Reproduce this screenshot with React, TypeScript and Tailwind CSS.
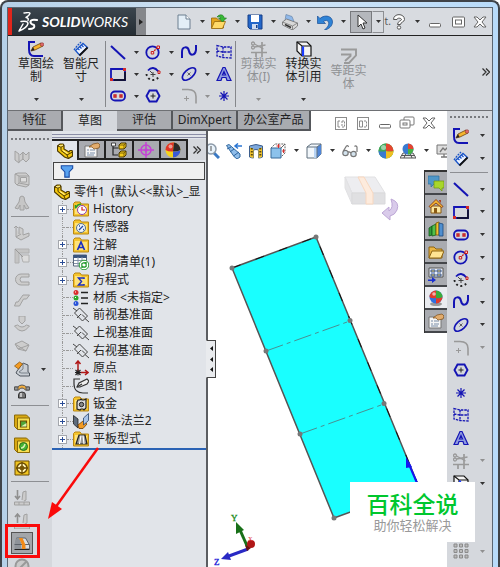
import type { ReactNode } from 'react';
import clsx from 'clsx';

/* ---------- Icon drawings, all on a 16 x 16 grid ---------- */

const folder = (
  <>
    <path d="M.5 2.500L2 1h5l1.500 2H15.500v12H.5z" fill="#f6c52e" stroke="#b98712" />
    <path d="M2 4h6l1 1h5v8H2z" fill="#fde27c" />
  </>
);

const icons: Record<string, ReactNode> = {
  sketch: (
    <>
      <path d="M7 1H1v7c0 5 2 7 5 7h9" fill="none" stroke="#1414b4" strokeWidth="2" />
      <path d="M3 10l2-4 8-4 2 3-8 4z" fill="#f5b52e" stroke="#6b4210" strokeWidth=".8" />
      <path d="M3 10l2-4 1.500 3z" fill="#222" />
      <circle cx="14" cy="3.500" r="1.800" fill="#e06a6a" stroke="#7a2020" strokeWidth=".5" />
    </>
  ),
  dimension: (
    <>
      <path d="M1 9l3-4 4-4" fill="none" stroke="#1a55c8" strokeWidth="1.300" strokeDasharray="2 1" />
      <path d="M2.500 9.500L10 2.500l4.500 4-8 7.500z" fill="#eef4ff" stroke="#1a55c8" strokeWidth="1.300" />
      <path d="M6.500 14.500l8-8" stroke="#111" strokeWidth="1.800" />
      <path d="M4.500 7.500L6.500 9M6.500 5.500l2 2M8.500 4l2 2" stroke="#1a55c8" strokeWidth="1.300" />
    </>
  ),
  line: <path d="M1 2l14 13" stroke="#1414b4" strokeWidth="2" />,
  rect: (
    <>
      <path d="M1 3h14v11H1z" fill="none" stroke="#1414b4" strokeWidth="1.800" />
      <path d="M4 14h11V6" fill="none" stroke="#111" strokeWidth="1.500" />
      <path d="M13 2h3v3h-3zM0 12h3v3H0z" fill="#d42a2a" />
    </>
  ),
  slot: (
    <>
      <rect x="1" y="3.500" width="14" height="9" rx="4" fill="none" stroke="#1414b4" strokeWidth="1.800" />
      <path d="M4 7h2v2H4zM10 7h2v2h-2z" fill="none" stroke="#c81e1e" strokeWidth="1.300" />
    </>
  ),
  circle: (
    <>
      <circle cx="7.500" cy="8.500" r="6.200" fill="none" stroke="#1414b4" strokeWidth="1.800" />
      <path d="M7 9l6-6" stroke="#c81e1e" strokeWidth="1.300" strokeDasharray="2 1" />
      <path d="M6.200 7.500h2.500v2.500H6.200zM12 2h2.500v2.500H12z" fill="#f5d5d5" stroke="#c81e1e" />
    </>
  ),
  arc: (
    <>
      <path d="M3 4.500q5-5.500 10.500 1" fill="none" stroke="#1414b4" strokeWidth="1.800" />
      <path d="M1.500 8a6.500 6.500 0 0 0 12 3" fill="none" stroke="#222" strokeWidth="1.900" strokeDasharray="1.900 2.600" />
      <path d="M5 5l2.500 2.500M8 6v5M5.500 8.500h5" stroke="#333" strokeWidth=".9" />
      <path d="M13 5h2v2.500h-2z" fill="#f5d5d5" stroke="#c81e1e" />
    </>
  ),
  spline: <path d="M1 14V8c0-6 6-6 7-1s6 5 7-1V1" fill="none" stroke="#1414b4" strokeWidth="2" />,
  ellipse: (
    <>
      <ellipse cx="8" cy="8" rx="8" ry="4.300" transform="rotate(-42 8 8)" fill="none" stroke="#1414b4" strokeWidth="1.700" />
      <path d="M6.500 6.500l3 3M9.500 6.500l-3 3" stroke="#555" strokeWidth=".9" />
    </>
  ),
  fillet: (
    <>
      <path d="M1 1.500h6q8 0 8 7v7" fill="none" stroke="#999" strokeWidth="1.600" />
      <path d="M3 10.500h5M5.500 8v5" stroke="#999" />
    </>
  ),
  planeGrid: (
    <path
      d="M1 1.500l6 1.500 8 0v11l-8-.500L1 12zM1 7l6 1h8M7 3v10.500"
      fill="none"
      stroke="#1414b4"
      strokeWidth="1.300"
      strokeDasharray="2.500 1"
    />
  ),
  textA: (
    <path
      d="M1 14.500l6-13h2l6 13h-4l-1-3H6l-1 3zM6.500 9h3L8 5.500z"
      fill="#8f9be0"
      stroke="#1414b4"
      strokeWidth="1.200"
      fillRule="evenodd"
    />
  ),
  polygon: (
    <>
      <path d="M4.500 2.500h7l3 5.500-3 5.500h-7l-3-5.500z" fill="none" stroke="#1414b4" strokeWidth="1.900" />
      <path d="M5.500 8h5M8 5.500v5" stroke="#222" />
    </>
  ),
  point: <path d="M8 3v10M3 8h10M4.500 4.500l7 7M11.500 4.500l-7 7" stroke="#1414b4" strokeWidth="1.200" />,
  trim: (
    <g fill="none" stroke="#9a9a9a" strokeWidth="1.300">
      <path d="M0 11.500h16M11 1v15M5 11v5" strokeWidth="1.700" />
      <path d="M3.500 6l11-2M3.500 3l9 5" />
      <circle cx="2" cy="2.500" r="1.500" />
      <circle cx="2" cy="6.500" r="1.500" />
    </g>
  ),
  convert: (
    <>
      <path d="M1 1h10l4 4v10H6L1 10z" fill="#f4f4f4" stroke="#111" strokeWidth="1.200" />
      <path d="M1 1l5 4h9M6 5v10" fill="none" stroke="#111" strokeWidth="1.200" />
      <path d="M7 5.500v9.500" stroke="#1a3cff" strokeWidth="2.200" />
    </>
  ),
  offset: <path d="M0 1.500h15v6L8 15H3M0 6.500h9.500V8L4 13" fill="none" stroke="#9a9a9a" strokeWidth="1.900" />,
  newDoc: (
    <>
      <path d="M2 1h8l4 4v10H2z" fill="#e3eef7" stroke="#6d7f90" />
      <path d="M10 1v4h4" fill="#fff" stroke="#6d7f90" />
    </>
  ),
  open: (
    <>
      <path d="M.5 14V4h5l2 2h5v8z" fill="#e3a41c" stroke="#96660a" strokeWidth=".8" />
      <path d="M.5 14.500l3-7h11l-3 7z" fill="#ffd968" stroke="#96660a" strokeWidth=".8" />
      <path d="M6 3c2.500-3.500 7-2.500 7 1h2.500L11.500 8l-4-4h2.500q-1-2-4-1z" fill="#37b837" stroke="#1d751d" strokeWidth=".6" />
    </>
  ),
  save: (
    <>
      <path d="M1 1h14v14H3l-2-2z" fill="#2467c9" stroke="#173f86" />
      <path d="M4 1h8v7H4z" fill="#fff" />
      <path d="M5 10h6v5H5z" fill="#cfdcf0" />
      <path d="M9 11h1.500v3H9z" fill="#173f86" />
    </>
  ),
  print: (
    <>
      <path d="M3 6.500l1-6 6 2 2 5-4 2z" fill="#8fb8ea" stroke="#6b87a8" strokeWidth=".7" />
      <path d="M.5 8l4-3 11 4v3l-5 4-10-5z" fill="#d8d8d8" stroke="#6e6e6e" strokeWidth=".8" />
      <path d="M.5 8l10 4 5-3M10.500 12v4" fill="none" stroke="#777" strokeWidth=".8" />
      <path d="M3 10.500l6 3" fill="none" stroke="#333" strokeWidth="1.500" />
    </>
  ),
  undo: (
    <path
      d="M.5 9.500V2l2.500 2.500C8 0 15.500 2 15.500 8c0 4-4 7.500-8 8 3-3 5-5 4-8-1-2-3-2-5-.500l2 2z"
      fill="#2f83d6"
      stroke="#1a4f96"
      strokeWidth=".7"
    />
  ),
  cursor: <path d="M5 1v12l3-3 2 5 2-1-2-5h4z" fill="#fff" stroke="#333" />,
  help: (
    <>
      <path d="M2.500 5.500c0-6.500 11-6.500 11 0 0 2.500-4 2.500-4 5h-3C6.500 7 10.500 7 10.500 5.500S6 3.500 6 5.500z" fill="#fff" stroke="#555" />
      <circle cx="8" cy="13.500" r="1.700" fill="#fff" stroke="#555" />
    </>
  ),
  minimize: <rect x="2.500" y="9.500" width="11" height="3.500" rx="1" fill="#fff" stroke="#666" />,
  maximize: (
    <g fill="#fff" stroke="#666">
      <rect x="2.500" y="3" width="12" height="10" rx="1" />
      <rect x="5.500" y="6" width="6" height="4" />
    </g>
  ),
  restore: (
    <g fill="#fff" stroke="#777">
      <rect x="5" y="2" width="10" height="8" rx="1" />
      <rect x="1" y="5" width="10" height="8" rx="1" />
      <rect x="4" y="8" width="4" height="2" />
    </g>
  ),
  close: <path d="M2 3h3l3 3 3-3h3l-4 5 4 5h-3l-3-3-3 3H2l4-5z" fill="#fff" stroke="#666" />,
  paneLeft: (
    <g fill="none" stroke="#8b8b8b">
      <rect x="2.500" y="2.500" width="11" height="12" fill="#fff" />
      <path d="M7 6H5v6h2" />
      <path d="M9 6h2.500v6H9z" strokeDasharray="2 1" />
    </g>
  ),
  paneRight: (
    <g fill="none" stroke="#8b8b8b">
      <rect x="2.500" y="2.500" width="11" height="12" fill="#fff" />
      <path d="M4.500 6h3v6h-3z" />
      <path d="M9 6h2.500v6H9" strokeDasharray="2 1" />
    </g>
  ),
  part: (
    <>
      <path d="M.5 3l2.500-2h3l1 1.500V6l5 3 1-1.500h2l.5 1.500v4l-4 2.500-4-1.500-7-6z" fill="#f6c90e" stroke="#4d3a00" strokeWidth="1.200" />
      <path d="M.5 3l3.500 1 3-1.500M4 4v3.500l6 4.500 5.500-3M10 12l1.500 3.500" fill="none" stroke="#4d3a00" />
      <path d="M2 2.500l2 .5 2-1M6 7.500l4.500 3" stroke="#fff3a8" fill="none" />
    </>
  ),
  property: (
    <>
      <path d="M1 4h12v11H1z" fill="#f5f5f5" stroke="#777" />
      <path d="M3 8h2M3 11h2M6 8h5M6 11h5M3 13h7" stroke="#7a8ea8" strokeWidth="1.200" />
      <path d="M5 5l4-3 5-1 2 2-1 3-5 1-2-2z" fill="#e2ac6d" stroke="#7b4c16" strokeWidth=".7" />
    </>
  ),
  config: (
    <>
      <path d="M2 4v9h5M2 6h5" stroke="#222" fill="none" strokeWidth="1.200" />
      <path d="M.5 1h4v3h-4z" fill="#fff" stroke="#444" />
      <path d="M8 3l2-2h5v4l-2 2H8z" fill="#f3cb1b" stroke="#4d3a00" />
      <path d="M8 11l2-2h5v4l-2 2H8z" fill="#f3cb1b" stroke="#4d3a00" />
      <path d="M8 3h5v4M13 3l2-2M8 11h5v4M13 11l2-2" fill="none" stroke="#4d3a00" strokeWidth=".7" />
    </>
  ),
  target: (
    <g fill="none" stroke="#c541d5" strokeWidth="1.500">
      <circle cx="8" cy="8" r="5" />
      <path d="M8 0v16M0 8h16" />
      <circle cx="8" cy="8" r="1" />
    </g>
  ),
  sphere: (
    <>
      <circle cx="8" cy="8" r="7.500" fill="#f4d21c" />
      <path d="M9 .5A7.500 7.500 0 0 0 .5 8Q4 10 8 9.500z" fill="#e03426" />
      <path d="M9 .5A7.500 7.500 0 0 1 15.500 8Q12 10 8 9.500z" fill="#2a2a2a" />
      <path d="M8 15.500A7.500 7.500 0 0 0 15.500 8Q12 10 8 9.500z" fill="#3a5ad8" />
      <circle cx="5.500" cy="4.500" r="2" fill="#fff" opacity=".5" />
    </>
  ),
  appearance: (
    <>
      <circle cx="8" cy="8" r="7.500" fill="#3fae3f" />
      <path d="M8 .5A7.500 7.500 0 0 0 .5 8Q4 9 8 8z" fill="#3fa65a" />
      <path d="M8 .5A7.500 7.500 0 0 1 15.500 8Q12 9 8 8z" fill="#e5452f" />
      <path d="M8 15.500A7.500 7.500 0 0 0 15.500 8Q12 9 8 8z" fill="#f0c022" />
      <path d="M8 15.500A7.500 7.500 0 0 1 .5 8Q4 9 8 8z" fill="#3a7bd0" />
      <circle cx="5.500" cy="4.500" r="2.500" fill="#fff" opacity=".5" />
    </>
  ),
  colorBall: (
    <>
      <ellipse cx="8" cy="14" rx="6" ry="2" fill="#999" />
      <circle cx="8" cy="7" r="6.500" fill="#2f6fe0" />
      <path d="M8 .5A6.500 6.500 0 0 0 1.500 7Q4 9 8 8z" fill="#e23b2b" />
      <path d="M8 .5A6.500 6.500 0 0 1 14.500 7Q12 9 8 8z" fill="#3aab3a" />
      <path d="M8 13.500A6.500 6.500 0 0 0 14.500 7Q12 9 8 8z" fill="#e23b2b" />
      <circle cx="6" cy="4" r="1.800" fill="#fff" opacity=".6" />
    </>
  ),
  scene: (
    <>
      <path d="M0 15l3-5h10l3 5zM4 15l2-5M12 15l-2-5M1 12.500h14" fill="#eee" stroke="#555" />
      <circle cx="8" cy="6" r="5.500" fill="#3a7bd0" />
      <path d="M8 .5A5.500 5.500 0 0 1 13.500 6Q10 7 8 6z" fill="#e5452f" />
      <path d="M8 11.500A5.500 5.500 0 0 0 13.500 6H8z" fill="#46b146" />
    </>
  ),
  monitor: (
    <>
      <path d="M1 2h14v9H1z" fill="#ddd" stroke="#777" />
      <path d="M4 9l3-4 2 2 3-3M5 14h6M8 11v3" fill="none" stroke="#777" strokeWidth="1.300" />
    </>
  ),
  zoomFit: (
    <>
      <path d="M10 10l5 5" stroke="#3a79c4" strokeWidth="3" />
      <circle cx="7" cy="6" r="5" fill="#e9f3fb" stroke="#8c9aa8" strokeWidth="1.500" />
      <path d="M7 3v5" stroke="#555" />
    </>
  ),
  prevView: (
    <>
      <path d="M.5 2.500L3 1.500l11 9.500v3l-3 2L8 13.500z" fill="#8fbdea" stroke="#33699e" />
      <path d="M1 6l4-2M4 9l4-3M7.500 13l5.500-4" stroke="#2c64a0" />
      <path d="M16 3H9M12 .500L9 3l3 2.500" fill="none" stroke="#2c77d4" strokeWidth="1.500" />
    </>
  ),
  section: (
    <>
      <path d="M1.500 3q6.500-3 13 0v11q-2 1-4 1V7q-2.500-1-5 0v8q-2 0-4-1z" fill="#7da8dc" stroke="#3d5f8d" />
      <path d="M2 4.500l3.500 1.500v9L2 14zM10.500 6L14 4.500V14l-3.500 1z" fill="#f0c32e" />
      <path d="M3.800 5v9M12.300 5v9" stroke="#5e4a0b" strokeDasharray="1.500 1.500" strokeWidth="2" />
    </>
  ),
  orient: (
    <>
      <path d="M1 5l4-4h10v9l-4 4" fill="#fff" stroke="#666" strokeDasharray="2 1" />
      <path d="M11 5l4-4" stroke="#666" />
      <path d="M1 5h10v10H1z" fill="#8cc2ec" stroke="#386a99" />
      <path d="M6.500 3h4M8.500 1v4M12 8h3M13.500 6v4" stroke="#d43030" />
    </>
  ),
  display: (
    <>
      <path d="M1 4l4-3h10v10l-4 4H1z" fill="#f2f7fb" stroke="#60707f" />
      <path d="M8 4.500h3V15H8z" fill="#b7d3f4" />
      <path d="M11 4l4-3v10l-4 4z" fill="#4f86d8" />
      <path d="M1 4h10v11M11 4l4-3" fill="none" stroke="#60707f" />
    </>
  ),
  glasses: (
    <g fill="#d3e3ee" stroke="#777" strokeWidth="1.200">
      <path d="M1 8.500L4.500 3q1.500-1 2 1M15 9l0-5q-1-2-2.500-.500" fill="none" />
      <circle cx="3.500" cy="10" r="2.700" />
      <circle cx="11.500" cy="11" r="2.700" />
      <path d="M6 9q1.500-.500 3 1" fill="none" />
    </g>
  ),
  filter: <path d="M1.500 2h13v3l-4 4v6h-5V9l-4-4z" fill="#58a2f0" stroke="#1b4ca5" strokeWidth="1.300" />,
  chat: (
    <>
      <path d="M0 1h11v8H6l-3 3V9H0z" fill="#4f97c8" stroke="#2d6d9c" strokeWidth=".7" />
      <path d="M6 6h10v7h-2v3l-3-3H6z" fill="#a8d62b" stroke="#6b9312" strokeWidth=".7" />
    </>
  ),
  home: (
    <>
      <path d="M3 8h10v7H3z" fill="#fbe7a0" stroke="#8a5a12" />
      <path d="M1 8.500l7-7 7 7-1.500 1L8 5 2.500 9.500z" fill="#f2b632" stroke="#8a3b12" strokeWidth=".9" />
      <path d="M6 10h3v5H6z" fill="#8a5a12" />
      <path d="M11 2h2v3l-2-2z" fill="#a8452a" />
    </>
  ),
  books: (
    <>
      <path d="M1 7l3-2v9l-3 1z" fill="#2f9e3a" stroke="#145a1c" strokeWidth=".8" />
      <path d="M4 5l4-2v11l-4 1z" fill="#51c04b" stroke="#145a1c" strokeWidth=".8" />
      <path d="M8 2l3-1v13H8z" fill="#f1c232" stroke="#7d5b00" strokeWidth=".8" />
      <path d="M11 2l4 1v12h-4z" fill="#4f8fd0" stroke="#1c4a7d" strokeWidth=".8" />
    </>
  ),
  folderOpen: (
    <>
      <path d="M1 14V3h5l2 2h6v9z" fill="#eab544" stroke="#8d6412" />
      <path d="M1 14l3-7h12l-3 7z" fill="#ffe493" stroke="#8d6412" />
    </>
  ),
  palette: (
    <>
      <path d="M1 1h14v9H1z" fill="#e8edf4" stroke="#555" />
      <path d="M3 3h4v2H3zM9 3h4v2H9zM3 7h4v2H3zM9 7h4v2H9z" fill="#f0d060" stroke="#38599b" />
      <path d="M0 12.500h4V10l4 3-4 3v-2H0z" fill="#1a2fd0" />
    </>
  ),
  history: (
    <>
      {folder}
      <circle cx="9" cy="9" r="4.500" fill="#fff" stroke="#8d3fae" />
      <path d="M9 6v3h3" fill="none" stroke="#d42121" strokeWidth="1.200" />
      <path d="M2.500 4v3.500M2.500 7l2.500-3 3-1" fill="none" stroke="#2a9a2a" strokeWidth="1.500" />
    </>
  ),
  sensor: (
    <>
      {folder}
      <circle cx="8" cy="9" r="4.500" fill="#eef4fb" stroke="#55708d" />
      <path d="M6 11l4-4M6 7h1M10 10.500h1" stroke="#264ba5" strokeWidth="1.300" />
    </>
  ),
  note: (
    <>
      {folder}
      <path d="M4.500 13L8 5l3.500 8M6 10.500h4" fill="none" stroke="#1c2fc0" strokeWidth="1.700" />
    </>
  ),
  cutList: (
    <>
      <path d="M.5 1h13v11H.5z" fill="#fff" stroke="#56657d" />
      <path d="M.5 2.500h13" stroke="#39537d" strokeWidth="3" />
      <path d="M1 6.500h12M1 9.500h12M5 3v9M9 3v9" stroke="#8493aa" />
      <circle cx="11" cy="11" r="4.800" fill="#fff" stroke="#289d32" />
      <path d="M8.500 10.500q2-3 4.500-.500v-2M13.500 11.500q-2 3-4.500.500v2" fill="none" stroke="#289d32" strokeWidth="1.500" />
    </>
  ),
  equation: (
    <>
      {folder}
      <path d="M11 7V6H5.500l3 3.500-3 3.500H11v-1" fill="none" stroke="#1c2fc0" strokeWidth="1.500" />
    </>
  ),
  material: (
    <>
      <circle cx="3" cy="2.500" r="2.500" fill="#d92c2c" />
      <circle cx="3" cy="8" r="2.500" fill="#2ba82b" />
      <circle cx="3" cy="13.500" r="2.500" fill="#2a53d8" />
      <path d="M2 2h1M2 7.500h1M2 13h1" stroke="#fff" />
      <path d="M8 2.500h7M8 8h7M8 13.500h7" stroke="#222" strokeWidth="1.600" />
    </>
  ),
  plane: (
    <g fill="none" stroke="#444">
      <path d="M1.500 6l5-5 8 8-5 5z" />
      <path d="M0 1l4 3M12 11.500l4 3.500M4 11l4-4M9 7.500l3 3" />
    </g>
  ),
  origin: (
    <g fill="none" strokeWidth="1.500">
      <path d="M5 11V1M2.500 4L5 1l2.500 3M6 12.500h8.500M12 10l3 2.500-3 2.500" stroke="#b01818" />
      <path d="M2.500 10l5 5M7.500 10l-5 5M5 9.500v6M2 12.500h6" stroke="#222" strokeWidth="1.100" />
    </g>
  ),
  sketchNode: (
    <g fill="none" stroke="#333" strokeWidth="1.200">
      <path d="M7 1H1v5c0 6 4 9 9 9h5" />
      <path d="M4 9l2-4 8-4 2 2-2 3-7 3z" fill="#eee" />
      <path d="M4 9l5-3" />
    </g>
  ),
  sheetMetal: (
    <>
      {folder}
      <path d="M4 6l1-2h2l1-1 1 1h2l2-1v9l-2 2-1-1H8l-1 1-3-1z" fill="#ddd" stroke="#222" strokeWidth="1.200" />
      <circle cx="8.500" cy="8.500" r="2.200" fill="#888" stroke="#222" />
    </>
  ),
  flange: (
    <>
      <path d="M.5 2.500L5 6v9L.5 11z" fill="#5d6b7d" stroke="#222" strokeWidth=".8" />
      <path d="M5 12l5-4 4 3-4 4.500H6z" fill="#f39b23" stroke="#6e3d00" strokeWidth=".8" />
      <path d="M10.500 5l5-4.500v7l-5 4.500z" fill="#a9c5ea" stroke="#27426d" strokeWidth=".8" />
    </>
  ),
  flatPattern: (
    <>
      {folder}
      <path d="M3 13l3-9h6l2 9z" fill="#999" stroke="#222" strokeWidth="1.200" />
      <path d="M8 4.500L6.500 13M10 4.500L11 13" stroke="#fff" strokeWidth="1.200" />
    </>
  ),
  grayFlange: (
    <g fill="#ccc" stroke="#a2a2a2">
      <path d="M1 2l4 3v9l-4-3zM5 13l4-3V3L6 6" />
      <path d="M9 10l3 3 3-3V3l-3 3-3-3z" />
    </g>
  ),
  grayBox: (
    <g fill="#cdcdcd" stroke="#a2a2a2">
      <path d="M1 2l3-1h8l3 3v9l-3 2-9-2-2-2z" />
      <path d="M5 4h10M5 4v7l10 2M1 2l4 2M5 11l-2 2" fill="none" />
      <path d="M6.500 5.500h6V10h-6z" fill="#ddd" />
    </g>
  ),
  grayBend: (
    <g fill="#c6c6c6" stroke="#a2a2a2">
      <path d="M6 2q2-2 4 0l1 5 4 6-3 1-2-4v5H6v-5l-2 4-3-1 4-6z" />
    </g>
  ),
  grayEdge: (
    <g fill="#cdcdcd" stroke="#a2a2a2">
      <path d="M2 2v10l5 3 8-4V8l-6 2V4L5 2v7" />
      <path d="M2 12l5-3M0 3l2-2 2 2" fill="none" />
    </g>
  ),
  grayMiter: (
    <g fill="#c4c4c4" stroke="#b0b0b0">
      <path d="M1 1h14v4H5v10H1z" />
      <path d="M7 7h8v7H9z" fill="#dcdcdc" />
      <path d="M1 1l8 8" stroke="#999" />
    </g>
  ),
  grayHem: (
    <path d="M15 3H7a5 5 0 0 0 0 11h8v-3H7q-2-2.500 0-5h8z" fill="#cdcdcd" stroke="#a2a2a2" />
  ),
  grayJog: <path d="M.5 13h5l4-7h3l3-4H9L4 9H2z" fill="#cdcdcd" stroke="#a2a2a2" />,
  grayPress: (
    <g fill="#cdcdcd" stroke="#a2a2a2">
      <path d="M5 0h6v5L8 8 5 5zM.5 10l3-1q4.500 4 9 0l3 1-4 4q-3.500 2-7 0z" />
    </g>
  ),
  grayCross: <path d="M1 6l7-3 7 4-3 6-8-2zM1 6l11 7M15 7L4 11" fill="#cdcdcd" stroke="#a2a2a2" />,
  corner: (
    <>
      <path d="M3 10l6-8 5 2v7l1.500 1v3H6l-4-3z" fill="#c9ced4" stroke="#4e555e" />
      <path d="M9 2v6l-4 3 2 1h8" fill="none" stroke="#7b828b" />
      <path d="M.5 5l5-4 3 2-4 5z" fill="#f39b23" stroke="#84510b" strokeWidth=".7" />
    </>
  ),
  forming: (
    <>
      <path d="M.5 6h4q3.500-4 7 0h4V3h-3q-4.500-4-9 0h-3z" fill="#f3ad3c" stroke="#555" />
      <path d="M.5 3h3.500v3H.5zM12 3h3.500v3H12z" fill="#999" stroke="#555" />
      <path d="M4.500 14v-3q0-3 3.500-3t3.500 3v3z" fill="#777" stroke="#333" />
      <path d="M7 9v4" stroke="#ddd" strokeWidth="1.500" />
    </>
  ),
  extrudeCut: (
    <>
      <path d="M.5 1h12l3 3v11.500h-12l-3-3z" fill="#d9a912" stroke="#8a6a0a" />
      <path d="M3.500 4h12v11.500h-12z" fill="#f8df50" stroke="#8a6a0a" />
      <path d="M6.500 7h6v6h-6z" fill="#4ea63a" stroke="#6b4c03" strokeWidth="1.200" />
      <path d="M7 12.500h5.500V9z" fill="#d9f0b4" />
    </>
  ),
  hole: (
    <>
      <path d="M.5 1h12l3 3v11.500h-12l-3-3z" fill="#d9a912" stroke="#8a6a0a" />
      <path d="M3.500 4h12v11.500h-12z" fill="#f8df50" stroke="#8a6a0a" />
      <circle cx="9.500" cy="9.500" r="4" fill="#45b534" stroke="#2c6d1d" />
      <path d="M7 11q3 0 4-4" stroke="#d9f0b4" strokeWidth="1.500" fill="none" />
    </>
  ),
  vent: (
    <>
      <path d="M1 1h14v14H1z" fill="#f0c420" stroke="#6b4c03" />
      <circle cx="8" cy="8" r="5" fill="#fff3b5" stroke="#6b4c03" strokeWidth="1.500" />
      <circle cx="8" cy="8" r="2" fill="#f0c420" stroke="#6b4c03" />
      <path d="M8 2v12M2 8h12" stroke="#6b4c03" strokeWidth="1.300" />
    </>
  ),
  grayUnfold: (
    <g fill="none" stroke="#a2a2a2">
      <path d="M3.500 0v9M1 6l2.500 3L6 6" stroke="#8f8f8f" strokeWidth="1.600" />
      <path d="M.5 12h15v3H.5zM8 10l1-8 3-1v9l-2 1M5 12v3M10 12v3" fill="#ccc" />
    </g>
  ),
  grayFold: (
    <g fill="none" stroke="#a2a2a2">
      <path d="M3.500 10V1M1 4l2.500-3L6 4" stroke="#8f8f8f" strokeWidth="1.600" />
      <path d="M.5 13h15v3H.5zM9 10l1-8 3-1v9l-2 1" fill="#ccc" />
    </g>
  ),
  flatten: (
    <>
      <path d="M2.500 3h9l4 7v4H2V9z" fill="#d9dce0" stroke="#5c626a" />
      <path d="M.5 9l2-6h3l2 6v5h-7z" fill="#8e9399" />
      <path d="M.5 9.500h15" stroke="#5c626a" />
      <path d="M5 3h3.500l3 7v4.500H8V10z" fill="#f18a17" />
      <path d="M.5 14.500h15" stroke="#222" />
    </>
  ),
  grayNone: (
    <>
      <circle cx="8" cy="8" r="6.500" fill="#c9c9c9" stroke="#999" strokeWidth="2" />
      <path d="M3.500 12.500l9-9" stroke="#999" strokeWidth="2" />
    </>
  ),
  dots: (
    <path
      d="M1 1h3v3H1zM6.500 1h3v3h-3zM12 1h3v3h-3zM1 6.500h3v3H1zM6.500 6.500h3v3h-3zM12 6.500h3v3h-3zM1 12h3v3H1zM6.500 12h3v3h-3zM12 12h3v3h-3z"
      fill="#bbb"
      stroke="#8a8a8a"
    />
  ),
};

function Icon({ name, className = 'size-4' }: { name: string; className?: string }) {
  return (
    <svg viewBox="0 0 16 16" className={clsx('block shrink-0', className)} aria-hidden="true">
      {icons[name]}
    </svg>
  );
}

function Caret({ muted = false }: { muted?: boolean }) {
  return (
    <svg viewBox="0 0 5 3" className={clsx('block h-[3px] w-[5px] shrink-0', muted ? 'text-[#909090]' : 'text-[#333]')} aria-hidden="true">
      <path d="M0 0h5L2.500 3z" fill="currentColor" />
    </svg>
  );
}

function MoreIcon() {
  return (
    <svg viewBox="0 0 8 8" className="size-2" aria-hidden="true">
      <path d="M.5.5L4 4 .5 7.500M4 .5L7.500 4 4 7.500" fill="none" stroke="#333" strokeWidth="1.300" />
    </svg>
  );
}

/* ---------- Title bar ---------- */

function TitleBar() {
  return (
    <header className="flex h-7 items-center border-b border-[#222] bg-[#d8dbe0]">
      <div className="flex h-full w-32 shrink-0 items-center gap-1 border-l-4 border-[#e0261c] bg-linear-to-b from-[#3b454d] to-[#252d34] pl-1.5 text-white">
        <svg viewBox="0 0 20 20" className="size-5 shrink-0" aria-hidden="true">
          <g fill="none" stroke="#fff" strokeLinecap="round" strokeLinejoin="round">
            <path d="M6 1q6-1 6 .5Q11 4 8 5.500q3 .5 2 3" strokeWidth="1.400" />
            <path d="M3 9.500q7-1 7 2Q9 16 1 19l4-7" strokeWidth="1.500" />
            <path d="M19 8q-6-1-6.500 1.500T16 13q1.500 4-5 4" strokeWidth="2" />
          </g>
        </svg>
        <span className="font-['Lato','Open_Sans',sans-serif] text-sm italic">
          <b>SOLID</b>WORKS
        </span>
      </div>
      <button aria-label="菜单" className="flex h-full w-2.5 shrink-0 items-center justify-center bg-[#85878b]">
        <svg viewBox="0 0 4 6" className="h-1.5 w-1">
          <path d="M0 0l4 3-4 3z" fill="#222" />
        </svg>
      </button>
      <div className="flex h-full flex-1 items-center justify-between pr-1 pl-7">
        {[
          ['newDoc', '新建'],
          ['open', '打开'],
          ['save', '保存'],
          ['print', '打印'],
          ['undo', '撤消'],
        ].map(([name, label]) => (
          <button key={name} aria-label={label} className="flex w-[35px] items-center gap-2 pl-0.5">
            <Icon name={name} />
            <Caret />
          </button>
        ))}
        <button aria-label="选择" className="flex h-[22px] items-stretch">
          <span className="flex w-[22px] items-center justify-center border border-[#77797d] bg-[#b4b7bc]">
            <Icon name="cursor" />
          </span>
          <span className="flex w-3 items-center justify-center border border-[#8d8f93] border-l-transparent">
            <Caret />
          </span>
        </button>
        <span className="text-[10px] text-[#555]">t.</span>
        <button aria-label="帮助" className="flex w-8 items-center gap-2">
          <Icon name="help" />
          <Caret />
        </button>
        <button aria-label="最小化" className="ml-1">
          <Icon name="minimize" />
        </button>
        <button aria-label="最大化" className="ml-1.5">
          <Icon name="maximize" />
        </button>
        <button aria-label="关闭" className="ml-1.5">
          <Icon name="close" />
        </button>
      </div>
    </header>
  );
}

/* ---------- Ribbon ---------- */

function BigTool({ icon, label, muted = false, caret = true, low = false }: { icon: string; label: string; muted?: boolean; caret?: boolean; low?: boolean }) {
  return (
    <button className={clsx('flex h-[66px] w-[45px] flex-col items-center text-xs leading-[13px]', muted ? 'text-[#8f9194]' : 'text-[#222]', low && 'pt-[7px]')}>
      <Icon name={icon} />
      <span className="w-[38px] break-all">{label}</span>
      {caret && (
        <span className="mt-auto pb-1.5">
          <Caret muted={muted} />
        </span>
      )}
    </button>
  );
}

const sketchTools = [
  ['line', 'circle', 'spline', 'planeGrid'],
  ['rect', 'arc', 'ellipse', 'textA'],
  ['slot', 'polygon', 'fillet', 'point'],
];

const noCaret = ['planeGrid', 'textA', 'polygon', 'point'];

function Ribbon() {
  return (
    <section className="flex h-[75px] items-start border-b border-[#6e7074] bg-[#d5d8dd] pt-[5px]">
      <div className="flex w-[97px] shrink-0 justify-center pl-1">
        <BigTool icon="sketch" label="草图绘制" />
        <BigTool icon="dimension" label="智能尺寸" />
      </div>
      <div className="grid h-[66px] w-[131px] shrink-0 grid-cols-[35px_36px_35px_18px] grid-rows-3 items-center border-x border-[#85878b] pl-1">
        {sketchTools.flat().map((name) => (
          <button key={name} aria-label={name} className="flex items-center gap-2">
            <Icon name={name} />
            {!noCaret.includes(name) && <Caret muted={name === 'fillet'} />}
          </button>
        ))}
      </div>
      <div className="flex">
        <BigTool icon="trim" label="剪裁实体(I)" muted />
        <BigTool icon="convert" label="转换实体引用" />
        <BigTool icon="offset" label="等距实体" muted caret={false} low />
      </div>
      <button aria-label="更多" className="mt-[27px] mr-0.5 ml-auto">
        <MoreIcon />
      </button>
    </section>
  );
}

/* ---------- Side toolbars ---------- */

function Grip() {
  return <div className="h-0 w-[38px] shrink-0 border-t-2 border-dotted border-[#77797d]" />;
}

function ToolGroup({ tools, className, carets }: { tools: string[]; className: string; carets: string[] }) {
  return (
    <div className={clsx('grid shrink-0 auto-rows-fr items-center', className)}>
      {tools.map((name) => (
        <button key={name} aria-label={name} className="flex items-center">
          <span className={clsx('flex size-[22px] items-center justify-center', name === 'flatten' && 'border border-[#555] bg-[#a3a6aa]')}>
            <Icon name={name} />
          </span>
          {carets.includes(name) && (
            <span className="ml-2">
              <Caret muted={name === 'fillet' || name === 'trim' || name === 'dots'} />
            </span>
          )}
        </button>
      ))}
    </div>
  );
}

function LeftToolbar() {
  return (
    <aside className="flex w-11 shrink-0 flex-col bg-[#d5d8dd] pt-[7px] pl-[3px]">
      <Grip />
      <ToolGroup className="mt-[5px] h-[69px]" tools={['grayFlange', 'grayBox', 'grayBend']} carets={[]} />
      <hr className="my-0.5 w-[38px] border-[#8d8f93]" />
      <ToolGroup
        className="mt-[3px] h-[181px]"
        tools={['grayEdge', 'grayMiter', 'grayHem', 'grayJog', 'grayPress', 'grayCross', 'corner', 'forming']}
        carets={['corner']}
      />
      <hr className="my-0.5 w-[38px] border-[#8d8f93]" />
      <ToolGroup className="mt-[3px] h-[68px]" tools={['extrudeCut', 'hole', 'vent']} carets={[]} />
      <hr className="my-0.5 w-[38px] border-[#8d8f93]" />
      <ToolGroup className="mt-[3px] h-[90px]" tools={['grayUnfold', 'grayFold', 'flatten', 'grayNone']} carets={[]} />
    </aside>
  );
}

const rightTools = [
  'line', 'rect', 'slot', 'circle', 'arc', 'spline', 'ellipse', 'fillet', 'polygon',
  'point', 'planeGrid', 'textA', 'trim', 'convert', 'offset', 'minimize', 'dots', 'paneLeft',
];

const rightCarets = ['sketch', 'dimension', 'line', 'rect', 'slot', 'circle', 'arc', 'spline', 'ellipse', 'fillet', 'trim', 'convert', 'dots'];

function RightToolbar() {
  return (
    <aside className="flex w-[45px] shrink-0 flex-col bg-[#d5d8dd] pt-[5px] pl-[3px]">
      <Grip />
      <ToolGroup className="mt-[6px] h-[46px]" tools={['sketch', 'dimension']} carets={rightCarets} />
      <hr className="mt-0.5 w-[38px] border-[#8d8f93]" />
      <ToolGroup className="mt-[5px] h-[407px]" tools={rightTools} carets={rightCarets} />
    </aside>
  );
}

/* ---------- Feature manager ---------- */

const treeItems = [
  { icon: 'history', label: 'History', expandable: true },
  { icon: 'sensor', label: '传感器' },
  { icon: 'note', label: '注解', expandable: true },
  { icon: 'cutList', label: '切割清单(1)', expandable: true },
  { icon: 'equation', label: '方程式', expandable: true },
  { icon: 'material', label: '材质 <未指定>' },
  { icon: 'plane', label: '前视基准面' },
  { icon: 'plane', label: '上视基准面' },
  { icon: 'plane', label: '右视基准面' },
  { icon: 'origin', label: '原点' },
  { icon: 'sketchNode', label: '草图1' },
  { icon: 'sheetMetal', label: '钣金', expandable: true },
  { icon: 'flange', label: '基体-法兰2', expandable: true },
  { icon: 'flatPattern', label: '平板型式', expandable: true },
];

function FeatureManager() {
  return (
    <section className="relative z-10 w-[156px] shrink-0 border-r-2 border-[#5b5d61] bg-[#e1e4e9]">
      <div className="mt-[3px] h-1 border-y border-[#8b8ea6]" />
      <div className="mt-px flex h-[21px] bg-[#d5d8dd]">
        {['part', 'property', 'config', 'target', 'sphere'].map((name, i) => (
          <button
            key={name}
            aria-label={name}
            className={clsx('flex flex-1 items-center justify-center border-t-2 border-r-2 border-[#222]', i === 0 ? 'bg-[#e1e4e9]' : 'border-b-2 bg-[#a9abb0]')}
          >
            <Icon name={name} />
          </button>
        ))}
        <button aria-label="更多" className="flex w-[18px] items-center justify-center">
          <MoreIcon />
        </button>
      </div>
      <label className="mx-px mt-0.5 flex h-[18px] items-center border border-[#444] bg-[#f0f0f0] pl-1.5">
        <Icon name="filter" className="size-3.5" />
        <input aria-label="过滤器" className="min-w-0 flex-1 bg-transparent text-xs outline-none" />
      </label>
      <div className="mt-[3px] grid h-[265px] auto-rows-fr items-center text-xs text-[#222]">
        <div className="flex items-center gap-1 overflow-hidden pl-0.5 whitespace-pre">
          <Icon name="part" />
          <span>零件1  (默认&lt;&lt;默认&gt;_显</span>
        </div>
        {treeItems.map(({ icon, label, expandable }) => (
          <div key={label} className="flex h-full items-center">
            <div className="ml-2.5 flex h-full items-center border-l border-dotted border-[#999]">
              {expandable ? (
                <button aria-label="展开" className="-ml-[5px] flex size-[9px] items-center justify-center border border-[#a4a7ad] bg-white">
                  <svg viewBox="0 0 5 5" className="size-[5px]">
                    <path d="M0 2.500h5M2.500 0v5" stroke="#2b4d96" />
                  </svg>
                </button>
              ) : (
                <span className="w-1 border-t border-dotted border-[#999]" />
              )}
              <span className="w-1.5 border-t border-dotted border-[#999]" />
            </div>
            <Icon name={icon} />
            <span className="ml-1 leading-4 whitespace-nowrap">{label}</span>
          </div>
        ))}
      </div>
      <div className="border-t-2 border-[#2a62b4]" />
      {/* Collapse handle that hangs over the edge of the panel */}
      <button aria-label="折叠面板" className="absolute top-[209px] -right-2.5 flex h-[38px] w-2.5 flex-col items-center justify-evenly border border-[#444] border-l-[#e9ebee] bg-[#e9ebee]">
        {[0, 1, 2].map((i) => (
          <svg key={i} viewBox="0 0 3 5" className="h-[5px] w-[3px]">
            <path d="M3 0v5L0 2.500z" fill="#111" />
          </svg>
        ))}
      </button>
    </section>
  );
}

/* ---------- Graphics area ---------- */

function Model() {
  return (
    <svg viewBox="208 131 239 436" className="absolute top-0 left-0 h-[436px] w-[239px]" aria-hidden="true">
      <path d="M232 268l84-31 103 250-85 31z" fill="#19ffff" stroke="#555" strokeWidth="1.500" />
      <path d="M232 268l84-31 103 250" fill="none" stroke="#111" strokeDasharray="9 16" />
      <path d="M266 351l84-30M300 434l84-30" stroke="#4a8f92" strokeDasharray="18 4 4 4" />
      <g fill="#777">
        <circle cx="232" cy="268" r="2.500" />
        <circle cx="316" cy="237" r="2.500" />
        <circle cx="266" cy="351" r="2.500" />
        <circle cx="350" cy="320.500" r="2.500" />
        <circle cx="300" cy="434" r="2.500" />
        <circle cx="384" cy="403.500" r="2.500" />
        <circle cx="334" cy="518" r="2.500" />
      </g>
      <path d="M408 462l9 21" stroke="#1515f0" strokeWidth="2" />
      <path d="M406 457l6 10-6 1z" fill="#1515f0" />

      {/* Faded flat pattern marker */}
      <g strokeLinejoin="round" opacity=".7">
        <path d="M345 177h30l10 16H352z" fill="#e6e6ea" stroke="#d5d5d8" />
        <path d="M345 177l7 16v11l-7-16z" fill="#dcdcdf" stroke="#d5d5d8" />
        <path d="M352 193h33v11h-33z" fill="#d4d4d7" stroke="#c9c9cc" />
        <path d="M358 177h6l9 16v11h-7v-11z" fill="#fde3cf" stroke="#f5c7a5" />
      </g>
      <path d="M391 199q9 3 6 11-2 5-7 6v4l-8-7 7-6v4q5-3 2-12z" fill="#d9cbea" stroke="#bda7d6" />

      {/* Axis triad */}
      <path d="M248 548l-8-18" stroke="#187018" strokeWidth="3" />
      <path d="M236 522l8 8-8 4z" fill="#187018" />
      <path d="M248 549l-19 7" stroke="#2929c4" strokeWidth="3" />
      <path d="M221 559l7-7 3 8z" fill="#2929c4" />
      <circle cx="251" cy="544" r="4" fill="#b01717" />
      <path d="M245 545l6 3-4 3z" fill="#6d1010" />
      <g fontFamily="Liberation Serif, serif" fontSize="9">
        <text x="231" y="521" fill="#1a8a1a" stroke="#1a8a1a" strokeWidth=".3">Y</text>
        <text x="214" y="565" fill="#2323d8" stroke="#2323d8" strokeWidth=".3">Z</text>
        <text x="248" y="541" fill="#e03a3a">x</text>
      </g>
    </svg>
  );
}

const viewTools: [string, boolean][] = [
  ['zoomFit', false],
  ['prevView', false],
  ['section', false],
  ['orient', true],
  ['display', true],
  ['glasses', true],
  ['appearance', false],
  ['scene', true],
  ['monitor', false],
];

function GraphicsArea() {
  return (
    <main className="relative min-w-0 flex-1 overflow-hidden bg-white">
      <Model />
      <div className="relative -ml-1 flex h-[39px] items-center overflow-hidden">
        {viewTools.map(([name, caret]) => (
          <button key={name} aria-label={name} className={clsx('flex shrink-0 items-center gap-2', caret ? 'w-9' : 'w-[22px]')}>
            <Icon name={name} />
            {caret && <Caret />}
          </button>
        ))}
      </div>
      <nav className="relative ml-auto flex w-[23px] flex-col border-t-2 border-l border-[#333]">
        {['chat', 'home', 'books', 'folderOpen', 'palette', 'colorBall', 'property'].map((name) => (
          <button key={name} aria-label={name} className={clsx('flex h-[23px] items-center justify-center border-b-2 border-[#44464a]', name === 'colorBall' ? 'bg-[#e9ebef]' : 'bg-[#a9abb0]')}>
            <Icon name={name} />
          </button>
        ))}
      </nav>
    </main>
  );
}

/* ---------- Command tabs ---------- */

function CommandTabs() {
  const tabs = [
    { label: '特征', width: 'w-[55px]' },
    { label: '草图', width: 'w-[54px]' },
    { label: '评估', width: 'w-14' },
    { label: 'DimXpert', width: 'w-[65px]' },
    { label: '办公室产品', width: 'w-[73px]' },
  ];

  return (
    <div className="flex h-5 shrink-0 bg-white">
      {tabs.map(({ label, width }) => (
        <button
          key={label}
          className={clsx(
            'shrink-0 text-xs leading-4 text-[#222]',
            width,
            label === '草图' ? 'bg-[#d5d8dd]' : 'border-r-2 border-b-2 border-[#55575b] bg-[#a9abb0]',
          )}
        >
          {label}
        </button>
      ))}
      <div className="ml-auto flex items-end gap-1.5 pr-2.5">
        {['paneLeft', 'paneRight', 'minimize', 'restore', 'close'].map((name) => (
          <button key={name} aria-label={name}>
            <Icon name={name} />
          </button>
        ))}
      </div>
    </div>
  );
}

export default function App() {
  return (
    <div className="relative h-screen overflow-hidden bg-white font-['Noto_Sans','Noto_Sans_CJK_SC',sans-serif]">
      <div className="flex h-full flex-col rounded-t-lg border-x-2 border-t-2 border-[#3f4349] bg-linear-to-r from-[#b5d0e8] via-[#d4e6f5] to-[#b8dbfa] px-[5px] pt-[5px]">
        <div className="flex min-h-0 flex-1 flex-col border-x border-t border-[#5b6672]">
          <TitleBar />
          <Ribbon />
          <div className="flex min-h-0 flex-1">
            <div className="flex min-w-0 flex-1 flex-col">
              <CommandTabs />
              <div className="flex min-h-0 flex-1">
                <LeftToolbar />
                <FeatureManager />
                <GraphicsArea />
              </div>
            </div>
            <RightToolbar />
          </div>
        </div>
      </div>

      {/* Red callout on the flatten button */}
      <svg viewBox="0 0 100 130" className="pointer-events-none absolute top-[437px] left-0 z-20 h-[130px] w-[100px]" aria-hidden="true">
        <path d="M98 11L55 71" stroke="#fa0a0a" strokeWidth="2.500" />
        <path d="M48 82l4-17 10 7z" fill="#fa0a0a" />
        <path d="M6.500 88.500h32v31h-32z" fill="none" stroke="#fa0a0a" strokeWidth="3" />
      </svg>

      <div className="absolute top-[482px] left-[350px] z-20 flex h-[60px] w-[125px] flex-col items-center justify-center bg-white">
        <strong className="text-[23px] leading-[26px] font-medium text-[#00c72e]">百科全说</strong>
        <span className="text-[13px] leading-4 text-[#999]">助你轻松解决</span>
      </div>
    </div>
  );
}
